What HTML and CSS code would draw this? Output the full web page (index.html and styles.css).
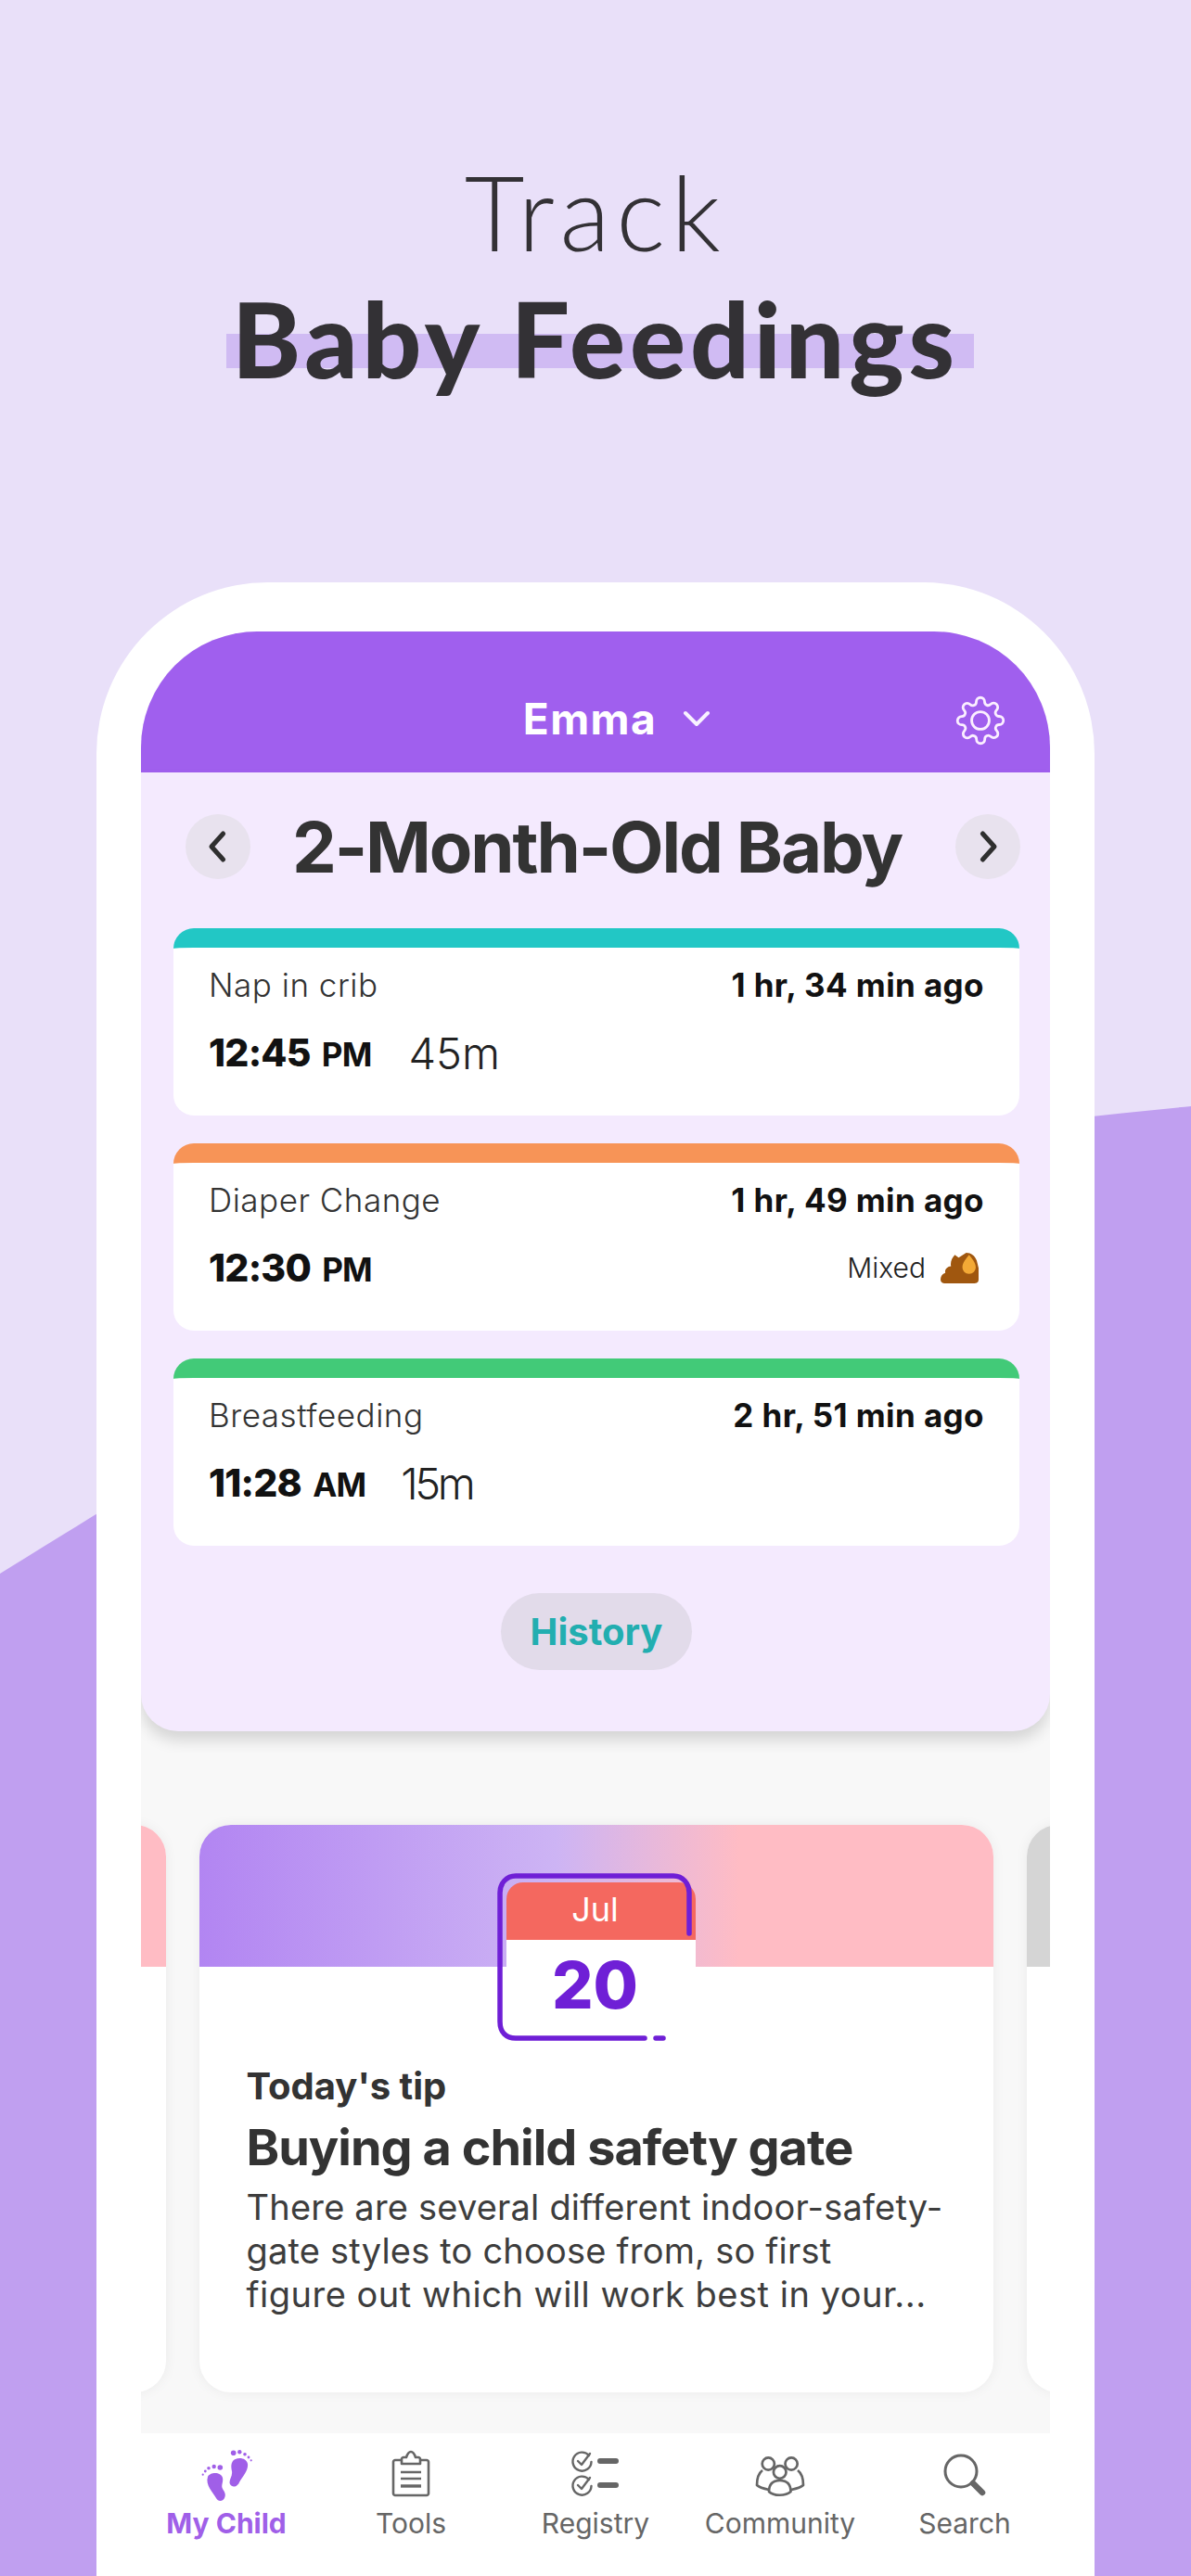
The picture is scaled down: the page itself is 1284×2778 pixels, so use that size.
FILE: index.html
```html
<!DOCTYPE html>
<html lang="en">
<head>
    <meta charset="UTF-8">
    <meta name="viewport" content="width=device-width, initial-scale=1.0">
    <title>Track Baby Feedings</title>
    <link rel="stylesheet" href="styles.css">
</head>
<body>
    <svg class="backdrop" viewBox="0 0 1284 2778" aria-hidden="true">
        <path d="M0 1697 C140 1610 400 1450 620 1340 C820 1245 1050 1215 1284 1193 V2778 H0Z" fill="#c09ff0"/>
    </svg>

    <header class="hero">
        <h1 class="hero-light">Track</h1>
        <h2 class="hero-bold"><span class="marker">Baby Feedings</span></h2>
    </header>

    <div class="phone">
        <div class="screen">
            <div class="topbar">
                <span class="child-name">Emma</span>
                <svg class="name-chevron" viewBox="0 0 30 20"><path d="M3 4l12 12L27 4" fill="none" stroke="#f8f2ff" stroke-width="4" stroke-linecap="round" stroke-linejoin="round"/></svg>
                <svg class="gear" viewBox="0 0 24 24" fill="none" stroke="#fbefff" stroke-width="1.25">
                    <circle cx="12" cy="12" r="4.2"/>
                    <path d="M19.4 15a1.65 1.65 0 0 0 .33 1.82l.06.06a2 2 0 0 1 0 2.83 2 2 0 0 1-2.83 0l-.06-.06a1.65 1.65 0 0 0-1.82-.33 1.65 1.65 0 0 0-1 1.51V21a2 2 0 0 1-2 2 2 2 0 0 1-2-2v-.09A1.65 1.65 0 0 0 9 19.4a1.65 1.65 0 0 0-1.82.33l-.06.06a2 2 0 0 1-2.83 0 2 2 0 0 1 0-2.83l.06-.06a1.65 1.65 0 0 0 .33-1.82 1.65 1.65 0 0 0-1.51-1H3a2 2 0 0 1-2-2 2 2 0 0 1 2-2h.09A1.65 1.65 0 0 0 4.6 9a1.65 1.65 0 0 0-.33-1.82l-.06-.06a2 2 0 0 1 0-2.83 2 2 0 0 1 2.83 0l.06.06a1.65 1.65 0 0 0 1.82.33H9a1.65 1.65 0 0 0 1-1.51V3a2 2 0 0 1 2-2 2 2 0 0 1 2 2v.09a1.65 1.65 0 0 0 1 1.51 1.65 1.65 0 0 0 1.82-.33l.06-.06a2 2 0 0 1 2.83 0 2 2 0 0 1 0 2.83l-.06.06a1.65 1.65 0 0 0-.33 1.82V9a1.65 1.65 0 0 0 1.51 1H21a2 2 0 0 1 2 2 2 2 0 0 1-2 2h-.09a1.65 1.65 0 0 0-1.51 1z"/>
                </svg>
            </div>

            <section class="summary">
                <div class="pager">
                    <span class="arrow"><svg viewBox="0 0 24 30"><path d="M16 5L7 15l9 10" fill="none" stroke="#2f2f2f" stroke-width="3.6" stroke-linecap="round" stroke-linejoin="round"/></svg></span>
                    <div class="age">2-Month-Old Baby</div>
                    <span class="arrow"><svg viewBox="0 0 24 30"><path d="M8 5l9 10-9 10" fill="none" stroke="#2f2f2f" stroke-width="3.6" stroke-linecap="round" stroke-linejoin="round"/></svg></span>
                </div>

                <div class="events">
                    <article class="event event-nap">
                        <div class="event-row">
                            <span class="event-name">Nap in crib</span>
                            <span class="event-ago">1 hr, 34 min ago</span>
                        </div>
                        <div class="event-row event-detail">
                            <span class="event-time">12:45 <small>PM</small></span>
                            <span class="event-length">45m</span>
                        </div>
                    </article>
                    <article class="event event-diaper">
                        <div class="event-row">
                            <span class="event-name">Diaper Change</span>
                            <span class="event-ago">1 hr, 49 min ago</span>
                        </div>
                        <div class="event-row event-detail">
                            <span class="event-time">12:30 <small>PM</small></span>
                            <span class="event-type">Mixed
                                <svg class="mixed-icon" viewBox="0 0 40 32">
                                    <path d="M0 28c0-3 2-6 5-7-1-3 2-7 6-7-1-4 1-9 4-12l4 3 8-5c5 0 9 3 11 8l2 8v12c0 3-2 4-4 4H4c-3 0-4-2-4-4z" fill="#a0570f"/>
                                    <path d="M30 2c3 4 7 8 7 13 0 4-3 7-7 7s-7-3-7-7c0-5 4-9 7-13z" fill="#f3a936"/>
                                </svg>
                            </span>
                        </div>
                    </article>
                    <article class="event event-feed">
                        <div class="event-row">
                            <span class="event-name">Breastfeeding</span>
                            <span class="event-ago">2 hr, 51 min ago</span>
                        </div>
                        <div class="event-row event-detail">
                            <span class="event-time">11:28 <small>AM</small></span>
                            <span class="event-length event-length-short">15m</span>
                        </div>
                    </article>
                </div>

                <div class="history">History</div>
            </section>

            <section class="carousel">
                <div class="tip tip-peek tip-pink"></div>
                <article class="tip">
                    <div class="tip-band"></div>
                    <div class="calendar">
                        <svg class="calendar-line" viewBox="0 0 220 186" fill="none" stroke="#6f1fd6" stroke-width="5.5" stroke-linecap="round">
                            <path d="M207 65V21C207 11 200 3 190 3H20C10 3 3 11 3 21V160C3 172 10 178 20 178H159"/>
                            <path d="M171 178H179"/>
                        </svg>
                        <div class="calendar-month">Jul</div>
                        <div class="calendar-day">20</div>
                    </div>
                    <div class="tip-body">
                        <div class="tip-label">Today's tip</div>
                        <div class="tip-title">Buying a child safety gate</div>
                        <p class="tip-text">There are several different indoor-safety-<br>gate styles to choose from, so first<br><span class="tip-text-end">figure out which will work best in your...</span></p>
                    </div>
                </article>
                <div class="tip tip-peek tip-grey"></div>
            </section>

            <nav class="tabs">
                <a class="tab tab-active">
                    <svg class="tab-icon" viewBox="0 0 60 64" fill="#a05fe8">
                        <path d="M10 33C12 28 24 27 26 34C27 39 24 42 26 46C28 49 30 52 28 56C26 60 21 60 19 56C16 50 7 42 10 33Z"/>
                        <path d="M37 16C41 11 52 12 53 19C54 26 48 32 44 39C42 44 36 45 34 41C32 37 37 33 36 27C35 23 35 19 37 16Z"/>
                        <circle cx="23.3" cy="23" r="2.8"/><circle cx="16.7" cy="22" r="2.2"/><circle cx="11" cy="23.7" r="1.8"/><circle cx="7.3" cy="27" r="1.4"/><circle cx="4.7" cy="30.7" r="1.1"/>
                        <circle cx="37.7" cy="7.3" r="2.8"/><circle cx="44.3" cy="6.3" r="2.2"/><circle cx="50" cy="8.7" r="1.8"/><circle cx="54" cy="12" r="1.4"/><circle cx="56.7" cy="15.3" r="1.1"/>
                    </svg>
                    My Child
                </a>
                <a class="tab">
                    <svg class="tab-icon" viewBox="0 0 48 64" fill="none" stroke="#666" stroke-width="2.6" stroke-linejoin="round">
                        <path d="M14 15H7C6 15 5 16 5 17V51C5 52 6 53 7 53H41C42 53 43 52 43 51V17C43 16 42 15 41 15H34"/>
                        <path d="M14 19V14C14 13 15 12 16 12H19C20 9 22 6 24 6C26 6 28 9 29 12H32C33 12 34 13 34 14V19Z"/>
                        <path d="M13 28H35M13 35H35" stroke-width="2.6"/>
                        <path d="M13 43H35" stroke-width="3.4"/>
                    </svg>
                    Tools
                </a>
                <a class="tab">
                    <svg class="tab-icon" viewBox="0 0 56 64" fill="none" stroke="#666" stroke-width="2.4" stroke-linecap="round" stroke-linejoin="round">
                        <path d="M21 10A10 10 0 1 0 23.5 17"/>
                        <path d="M9 16l4 4 9-12"/>
                        <path d="M21 36A10 10 0 1 0 23.5 43"/>
                        <path d="M9 42l4 4 9-12"/>
                        <path d="M33 16H50M33 42H50" stroke-width="6"/>
                    </svg>
                    Registry
                </a>
                <a class="tab">
                    <svg class="tab-icon" viewBox="0 0 54 64" fill="none" stroke="#666" stroke-width="2.7" stroke-linejoin="round">
                        <circle cx="14.3" cy="19" r="6.6"/>
                        <circle cx="39.1" cy="19" r="6.6"/>
                        <circle cx="26.7" cy="28" r="6.8"/>
                        <path d="M15 49C15 40 20 37 26.7 37C33 37 38.5 40 38.5 49C33 54 20 54 15 49Z"/>
                        <path d="M8 26C4 29 2 34 2 42C5 45 10 46 15 47M46 26C50 29 52 34 52 42C49 45 44 46 39 47"/>
                    </svg>
                    Community
                </a>
                <a class="tab">
                    <svg class="tab-icon" viewBox="0 0 52 64" fill="none" stroke="#666" stroke-width="3" stroke-linecap="round">
                        <circle cx="22" cy="27" r="17"/>
                        <path d="M35 40L45 50" stroke-width="6.5"/>
                    </svg>
                    Search
                </a>
            </nav>
        </div>
    </div>
</body>
</html>
```

FILE: styles.css
```css
* {
    box-sizing: border-box;
}
html, body {
    margin: 0;
    padding: 0;
}
body {
    position: relative;
    width: 1284px;
    height: 2778px;
    overflow: hidden;
    background-color: #e9e0f9;
    font-family: Inter, "Noto Sans", sans-serif;
    color: #333;
}
.backdrop {
    position: absolute;
    top: 0;
    left: 0;
    width: 1284px;
    height: 2778px;
}

/* heading */
.hero {
    position: relative;
    height: 628px;
    padding-top: 163px;
    text-align: center;
    font-family: Lato, sans-serif;
    color: #333135;
}
.hero-light {
    margin: 0;
    font-size: 112px;
    line-height: 130px;
    font-weight: 300;
    letter-spacing: 6.5px;
}
.hero-bold {
    margin: 7px 0 0;
    font-size: 112px;
    line-height: 130px;
    font-weight: 900;
    letter-spacing: 4.9px;
}
.marker {
    position: relative;
    display: inline-block;
    z-index: 0;
}
.marker::before {
    content: "";
    position: absolute;
    z-index: -1;
    left: -6px;
    right: -16px;
    top: 60px;
    height: 37px;
    background-color: #d0bbf3;
}

/* phone */
.phone {
    position: relative;
    width: 1076px;
    height: 2200px;
    margin-left: 104px;
    padding: 53px 48px 0;
    background-color: #fff;
    border-radius: 185px 185px 0 0;
}
.screen {
    height: 2097px;
    background-color: #f8f8f8;
    border-radius: 125px 125px 0 0;
    overflow: hidden;
}
.topbar {
    position: relative;
    display: flex;
    align-items: center;
    justify-content: center;
    gap: 28px;
    height: 152px;
    padding: 36px 0 0 46px;
    background-color: #a05fee;
    color: #fff;
}
.child-name {
    font-size: 46px;
    font-weight: 700;
    letter-spacing: 1.5px;
}
.name-chevron {
    width: 30px;
    height: 20px;
}
.gear {
    position: absolute;
    right: 48px;
    top: 69px;
    width: 54px;
    height: 54px;
}

/* today's summary */
.summary {
    position: relative;
    z-index: 1;
    height: 1034px;
    padding: 45px 33px 0 35px;
    background-color: #f4eafe;
    border-radius: 0 0 40px 40px;
    box-shadow: 0 10px 16px rgba(0, 0, 0, 0.14);
}
.pager {
    display: flex;
    align-items: center;
    justify-content: space-between;
    height: 70px;
    margin: 0 -1px 0 13px;
}
.arrow {
    display: flex;
    align-items: center;
    justify-content: center;
    width: 70px;
    height: 70px;
    border-radius: 50%;
    background-color: #e8e2ee;
}
.arrow svg {
    width: 34px;
    height: 42px;
}
.age {
    padding-right: 13px;
    font-size: 76px;
    font-weight: 700;
    letter-spacing: -2.1px;
    color: #333;
}
.events {
    display: flex;
    flex-direction: column;
    gap: 30px;
    margin-top: 53px;
}
.event {
    height: 202px;
    padding: 20px 38px 0;
    background-color: #fff;
    border-top: 21px solid #ccc;
    border-radius: 22px;
}
.event-nap {
    border-top-color: #22c7c5;
}
.event-diaper {
    border-top-color: #f79457;
}
.event-feed {
    border-top-color: #42ca78;
}
.event-row {
    display: flex;
    align-items: center;
    justify-content: space-between;
    height: 40px;
}
.event-name {
    font-size: 35px;
    font-weight: 300;
    letter-spacing: 0.5px;
    color: #333;
}
.event-ago {
    font-size: 35px;
    font-weight: 700;
    letter-spacing: 0.4px;
    color: #111;
}
.event-detail {
    height: 52px;
    margin-top: 27px;
    justify-content: flex-start;
}
.event-time {
    font-size: 41px;
    font-weight: 800;
    letter-spacing: -0.8px;
    color: #111;
}
.event-time small {
    margin-left: 4px;
    font-size: 35px;
    font-weight: 700;
}
.event-length {
    margin-left: 40px;
    font-size: 47px;
    font-weight: 300;
    color: #222;
}
.event-length-short {
    margin-left: 38px;
    letter-spacing: -3.5px;
}
.event-type {
    display: flex;
    align-items: center;
    gap: 16px;
    margin-left: auto;
    margin-right: 6px;
    font-size: 30px;
    font-weight: 300;
    color: #222;
}
.mixed-icon {
    width: 41px;
    height: 33px;
}
.history {
    width: 206px;
    height: 83px;
    margin: 51px auto 0;
    border-radius: 42px;
    background-color: #e2dbea;
    font-size: 40px;
    font-weight: 700;
    line-height: 83px;
    text-align: center;
    color: #22aeb0;
}

/* tips */
.carousel {
    display: flex;
    justify-content: center;
    gap: 36px;
    height: 612px;
    margin-top: 101px;
    margin-left: 1px;
}
.tip {
    position: relative;
    flex: 0 0 856px;
    height: 612px;
    background-color: #fff;
    border-radius: 34px;
    overflow: hidden;
    box-shadow: 0 0 14px rgba(0, 0, 0, 0.06);
}
.tip-peek {
    background-color: #fff;
}
.tip-peek::before {
    content: "";
    display: block;
    height: 153px;
}
.tip-pink::before {
    background-color: #ffbcc4;
}
.tip-grey::before {
    background-color: #d5d5d5;
}
.tip-band {
    height: 153px;
    background: linear-gradient(90deg, #b285f2 0%, #cdb4f4 45%, #ffbcc4 68%);
}
.calendar {
    position: absolute;
    left: 321px;
    top: 52px;
    width: 214px;
    height: 180px;
    padding: 10px 0 0 10px;
}
.calendar-line {
    position: absolute;
    z-index: 1;
    left: 0;
    top: 0;
    width: 220px;
    height: 186px;
}
.calendar-month {
    height: 62px;
    padding-right: 12px;
    border-radius: 18px 18px 0 0;
    background-color: #f4685f;
    color: #fff;
    font-size: 36px;
    line-height: 58px;
    text-align: center;
}
.calendar-day {
    height: 100px;
    padding: 3px 12px 0 0;
    background-color: #fff;
    color: #6f1fd6;
    font-size: 70px;
    font-weight: 800;
    line-height: 92px;
    text-align: center;
}
.tip-body {
    padding: 106px 30px 0 51px;
    color: #333;
}
.tip-label {
    height: 46px;
    font-size: 40px;
    font-weight: 700;
    line-height: 46px;
}
.tip-title {
    margin-top: 12px;
    font-size: 54px;
    font-weight: 700;
    line-height: 62px;
    letter-spacing: -1px;
}
.tip-text {
    margin: 10px 0 0;
    font-size: 38px;
    line-height: 47px;
    font-weight: 400;
    letter-spacing: 0.2px;
    color: #3d3d3d;
}
.tip-text-end {
    letter-spacing: 0.5px;
}

/* bottom nav */
.tabs {
    display: grid;
    grid-template-columns: repeat(5, 199px);
    justify-content: center;
    height: 154px;
    margin-top: 44px;
    padding-top: 14px;
    background-color: #fff;
}
.tab {
    display: flex;
    flex-direction: column;
    align-items: center;
    font-size: 30px;
    font-weight: 400;
    color: #666;
}
.tab-active {
    color: #a05fe8;
    font-weight: 700;
}
.tab-icon {
    height: 64px;
    margin-bottom: 1px;
}
```
